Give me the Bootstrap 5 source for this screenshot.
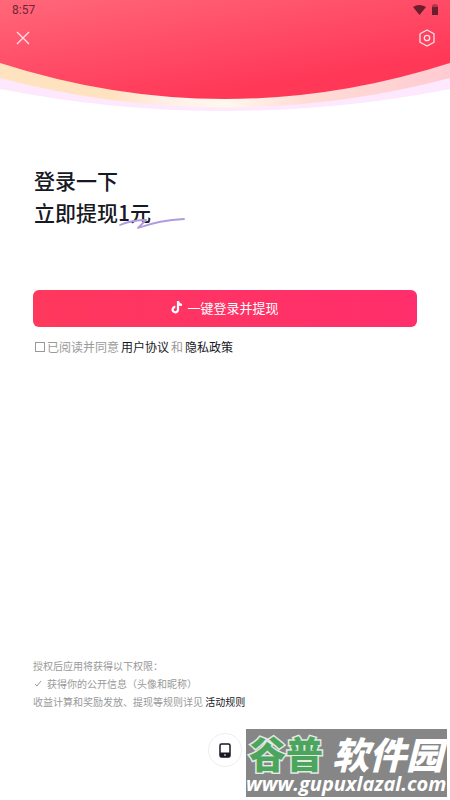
<!DOCTYPE html>
<html lang="zh-CN">
<head>
<meta charset="utf-8">
<meta name="viewport" content="width=device-width, initial-scale=1">
<title>登录</title>
<link href="https://cdn.jsdelivr.net/npm/bootstrap@5.3.0/dist/css/bootstrap.min.css" rel="stylesheet">
<style>
body{font-family:"Noto Sans CJK SC",sans-serif;color:#161823;background:#fff}
.hero{height:112px}
.hero-bg{z-index:-1}
.status{height:20px;padding:0 11px 0 12px;font:12px/20px Roboto,sans-serif;color:#6d2636}
.bar{padding:6px 13px 0 13px}
.icon-btn{width:20px;height:24px;color:#ffe3e8}
.pane{padding:0 33px}
.headline{font-size:21px;line-height:32px;font-weight:500;margin:52px 0 0 1px}
.swash{left:84px;top:20px}
.login{height:37px;margin-top:62px;padding:0 0 2px;border-radius:6px;font-size:13px;color:#fff;background:linear-gradient(90deg,#ff385d,#ff2e6c)}
.login:hover{color:#fff}
.agree{margin:11px 0 0 2px;gap:2px;font-size:12px;line-height:18px;color:#999}
.agree .form-check-input{width:10px;height:10px;border-radius:0;border-color:#999;box-shadow:none}
a.dark{color:#161823;text-decoration:none}
.terms{font-size:10px;line-height:18px;color:#999}
.phone{width:34px;height:34px;border-color:#eee!important;margin:22px 0 33px}
.watermark{right:3px;bottom:3px;width:201px;height:68px;background:#868686;color:#fff}
.wm-name{font-size:37px;line-height:42px;font-weight:900;padding:0 4px 0 3px;margin-top:3px}
.wm-green{color:#4ba55d;-webkit-text-stroke:3px #e4e9e4;paint-order:stroke fill}
.wm-rest{font-style:italic}
.wm-url{font:italic bold 20px/20px "Open Sans",sans-serif}
</style>
<script src="https://cdn.jsdelivr.net/npm/bootstrap@5.3.0/dist/js/bootstrap.bundle.min.js" defer></script>
</head>
<body>
<div class="d-flex flex-column min-vh-100 position-relative">
  <header class="hero position-relative z-0">
    <svg class="hero-bg position-absolute top-0 start-0 w-100 h-100" viewBox="0 0 450 112" preserveAspectRatio="none" aria-hidden="true">
      <defs>
        <linearGradient id="red" gradientUnits="userSpaceOnUse" x1="0" y1="-10" x2="22" y2="125"><stop offset="0" stop-color="#ff6b7c"/><stop offset="1" stop-color="#ff3858"/></linearGradient>
        <linearGradient id="band"><stop offset="0" stop-color="#ffe2c0"/><stop offset=".25" stop-color="#ffe2c0"/><stop offset=".36" stop-color="#ffeee6"/><stop offset=".5" stop-color="#fff8ee"/><stop offset=".68" stop-color="#ffdcd5"/><stop offset="1" stop-color="#ffcbd2"/></linearGradient>
      </defs>
      <path fill="#fde8fd" d="M0 0H450V89Q225 133 0 89Z"/>
      <path fill="url(#band)" d="M0 0H450V78Q225 137 0 78Z"/>
      <path fill="url(#red)" d="M0 0H450V63Q225 135 0 63Z"/>
    </svg>
    <div class="status d-flex justify-content-between align-items-center">
      <span>8:57</span>
      <svg width="26" height="12" viewBox="0 0 26 12" fill="#6b1e2e" aria-hidden="true"><path d="M0 3Q6-1 13 3L6.500 11Z"/><path d="M19 3H25V11H19Z"/><path opacity=".5" d="M20.500 0H23.500V1H25V3H19V1H20.500Z"/></svg>
    </div>
    <div class="bar d-flex justify-content-between">
      <button class="icon-btn btn p-0 border-0 d-flex align-items-center justify-content-center" type="button" aria-label="关闭"><svg width="14" height="14" viewBox="0 0 14 14" fill="none" stroke="currentColor" stroke-width="1.300"><path d="M1 1L13 13M13 1L1 13"/></svg></button>
      <button class="icon-btn btn p-0 border-0 d-flex align-items-center justify-content-center" type="button" aria-label="设置"><svg width="18" height="18" viewBox="0 0 18 18" fill="none" stroke="currentColor" stroke-width="1.300" stroke-linejoin="round"><path d="M9 1L16 4.800V13.200L9 17L2 13.200V4.800Z"/><circle cx="9" cy="9" r="2.700"/></svg></button>
    </div>
  </header>
  <main class="pane d-flex flex-column">
    <h1 class="headline">登录一下<br><span class="position-relative">立即提现1元<svg class="swash position-absolute" width="70" height="14" viewBox="0 0 70 14" fill="none" stroke="#b09be0" stroke-width="1.800" stroke-linecap="round" stroke-linejoin="round" aria-hidden="true"><path d="M2 8Q14 3 28 3L20 11Q42 3 66 2"/></svg></span></h1>
    <button class="login btn border-0 w-100 d-flex align-items-center justify-content-center gap-1" type="button">
      <svg width="12" height="13" viewBox="0 0 12 13" fill="none" stroke="#fff" stroke-width="2.200" aria-hidden="true"><path d="M7 0V8.500A2.700 2.700 0 1 1 4.300 5.900M7 .5Q7.500 3.700 11 4"/></svg><span>一键登录并提现</span>
    </button>
    <div class="agree d-flex align-items-center">
      <input class="form-check-input m-0" type="checkbox" id="ok"><label for="ok">已阅读并同意</label><a class="dark" href="#">用户协议</a><span>和</span><a class="dark" href="#">隐私政策</a>
    </div>
  </main>
  <footer class="mt-auto d-flex flex-column">
    <div class="pane terms">
      <div>授权后应用将获得以下权限：</div>
      <div class="d-flex align-items-center gap-1"><svg width="10" height="8" viewBox="0 0 10 8" fill="none" stroke="#999" aria-hidden="true"><path d="M2 4L4 6L8 1"/></svg>获得你的公开信息（头像和昵称）</div>
      <div>收益计算和奖励发放、提现等规则详见 <a class="dark" href="#">活动规则</a></div>
    </div>
    <button class="phone btn bg-white border rounded-circle p-0 d-flex align-items-center justify-content-center align-self-center" type="button" aria-label="手机号登录"><svg width="12" height="15" viewBox="0 0 12 15" aria-hidden="true"><rect x="1" y="1" width="10" height="13" rx="1.500" fill="none" stroke="#161823" stroke-width="1.500"/><path fill="#161823" d="M1 9.500H11V14H1Z"/><path stroke="#fff" d="M5 12H7"/></svg></button>
  </footer>
  <div class="watermark position-absolute d-flex flex-column">
    <div class="wm-name text-nowrap d-flex justify-content-between"><span class="wm-green">谷普</span><span class="wm-rest">软件园</span></div>
    <div class="wm-url text-nowrap">www.gupuxlazal.com</div>
  </div>
</div>
</body>
</html>
